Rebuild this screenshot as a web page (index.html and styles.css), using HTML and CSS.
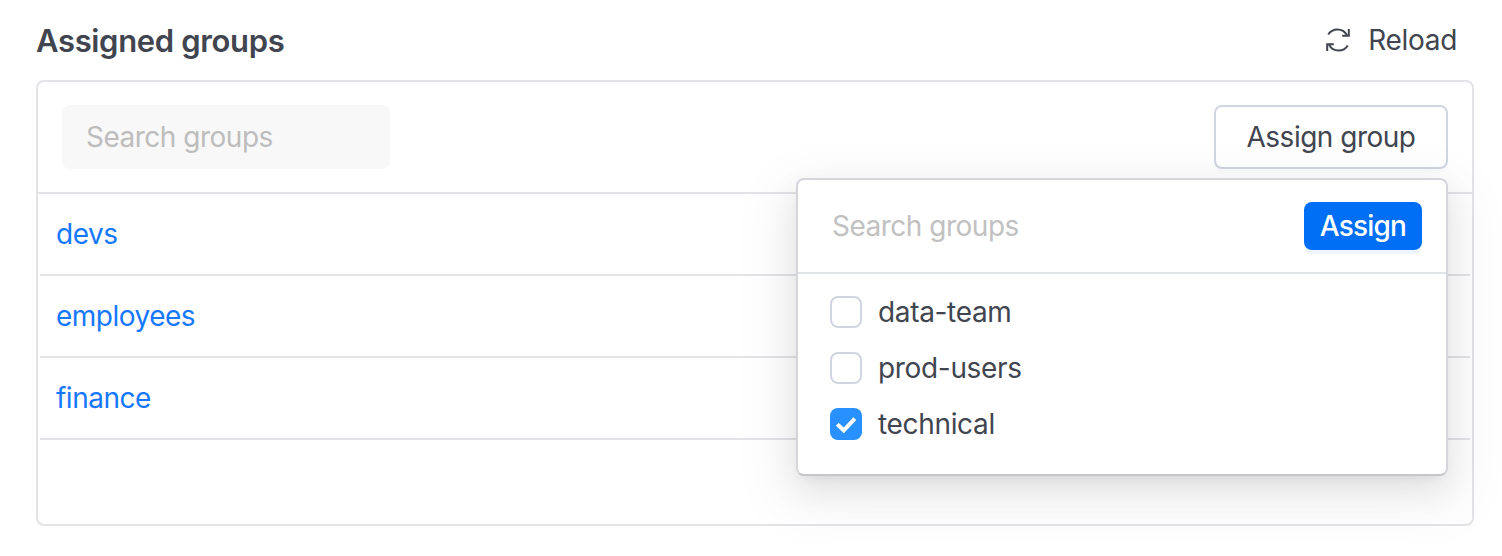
FILE: index.html
```html
<!DOCTYPE html>
<html lang="en">
<head>
<meta charset="utf-8">
<title>Assigned groups</title>
<link rel="stylesheet" href="styles.css">
</head>
<body>
<main class="page">
  <header class="page-header">
    <h1 class="title">Assigned groups</h1>
    <button class="reload" type="button">
      <svg class="reload-icon" width="28" height="28" viewBox="0 0 28 28" fill="none" stroke="currentColor" stroke-width="2">
        <path d="M4.2 8.5C8.5 1.8 18.7 1.5 23 9.2"/>
        <path d="M24.8 3V9.8H18.2"/>
        <path d="M23.8 19.5C19.5 26.2 9.3 26.5 5 18.8"/>
        <path d="M3.2 25V18.2H9.8"/>
      </svg>
      <span class="reload-label">Reload</span>
    </button>
  </header>
  <section class="panel">
    <div class="toolbar">
      <div class="search"><span>Search groups</span></div>
      <div class="dropdown">
        <button class="assign-group" type="button">Assign group</button>
        <div class="menu">
          <div class="menu-header">
            <span class="menu-search">Search groups</span>
            <button class="assign" type="button">Assign</button>
          </div>
          <div class="options">
            <label class="option"><span class="box"></span><span>data-team</span></label>
            <label class="option"><span class="box"></span><span>prod-users</span></label>
            <label class="option"><span class="box checked"><svg width="32" height="32" viewBox="0 0 32 32" fill="none" stroke="#fff" stroke-width="4"><path d="M7.3 16.2L13.8 22.4L24.8 10.6"/></svg></span><span>technical</span></label>
          </div>
        </div>
      </div>
    </div>
    <div class="rows">
      <a class="row">devs</a>
      <a class="row">employees</a>
      <a class="row">finance</a>
    </div>
  </section>
</main>
</body>
</html>
```
FILE: styles.css
```css
* { box-sizing: border-box; }
body {
  margin: 0;
  height: 556px;
  overflow: hidden;
  background: #fff;
  color: #41454f;
  font: 400 28px/32px Inter, "Liberation Sans", sans-serif;
  letter-spacing: -.5px;
}
button {
  padding: 0;
  border: 0;
  background: none;
  color: inherit;
  font: inherit;
  letter-spacing: inherit;
}
span { white-space: nowrap; }
.page { padding: 0 28px 0 36px; }
.page-header {
  display: flex;
  justify-content: space-between;
  align-items: center;
  height: 80px;
  padding-right: 17px;
}
.title {
  margin: 0;
  padding-top: 2px;
  font-size: 31px;
  font-weight: 600;
  line-height: 40px;
  letter-spacing: -.35px;
}
.reload { display: flex; align-items: center; gap: 16px; }
.reload-label { letter-spacing: -.3px; }
.reload-icon { display: block; }
.panel {
  height: 446px;
  border: 2px solid #e3e3e8;
  border-radius: 8px;
}
.toolbar {
  display: flex;
  justify-content: space-between;
  height: 112px;
  padding: 23px 24px;
  border-bottom: 2px solid #e3e3e8;
}
.search {
  display: flex;
  align-items: center;
  width: 328px;
  height: 64px;
  padding-left: 24px;
  border-radius: 8px;
  background: #f8f8f8;
  color: #bdbdbd;
}
.dropdown { position: relative; width: 234px; height: 64px; }
.assign-group {
  width: 234px;
  height: 64px;
  border: 2px solid #d0d5e0;
  border-radius: 8px;
  background: #fff;
  box-shadow: 0 4px 0 rgba(0, 0, 0, .015);
}
.menu {
  position: absolute;
  top: 73px;
  right: 0;
  z-index: 1;
  width: 652px;
  height: 298px;
  border: 2px solid #d5d6dc;
  border-bottom-color: #c6c6ca;
  border-radius: 8px;
  background: #fff;
  box-shadow: 0 12px 32px rgba(0, 0, 0, .08), 0 6px 12px -8px rgba(0, 0, 0, .12), 0 18px 56px 16px rgba(0, 0, 0, .05);
}
.menu-header {
  display: flex;
  justify-content: space-between;
  align-items: center;
  height: 94px;
  padding: 0 24px 0 34px;
  border-bottom: 2px solid #e0e4e9;
}
.menu-search { color: #c1c1c1; }
.assign {
  width: 118px;
  height: 48px;
  border-radius: 8px;
  background: #006ef5;
  color: #fff;
  font-weight: 500;
  letter-spacing: -.8px;
  box-shadow: 0 4px 0 #edf5ff;
}
.options { display: grid; gap: 24px; padding: 22px 32px; letter-spacing: -.33px; }
.option { display: flex; align-items: center; gap: 16px; height: 32px; }
.box { width: 32px; height: 32px; border: 2px solid #d0d5e0; border-radius: 8px; }
.box.checked { border: 0; background: #2890ff; }
.box svg { display: block; }
.rows { padding: 0 2px; }
.row {
  display: flex;
  align-items: center;
  height: 82px;
  padding-left: 16px;
  border-bottom: 2px solid #e3e3e8;
  color: #1677ff;
}
```
